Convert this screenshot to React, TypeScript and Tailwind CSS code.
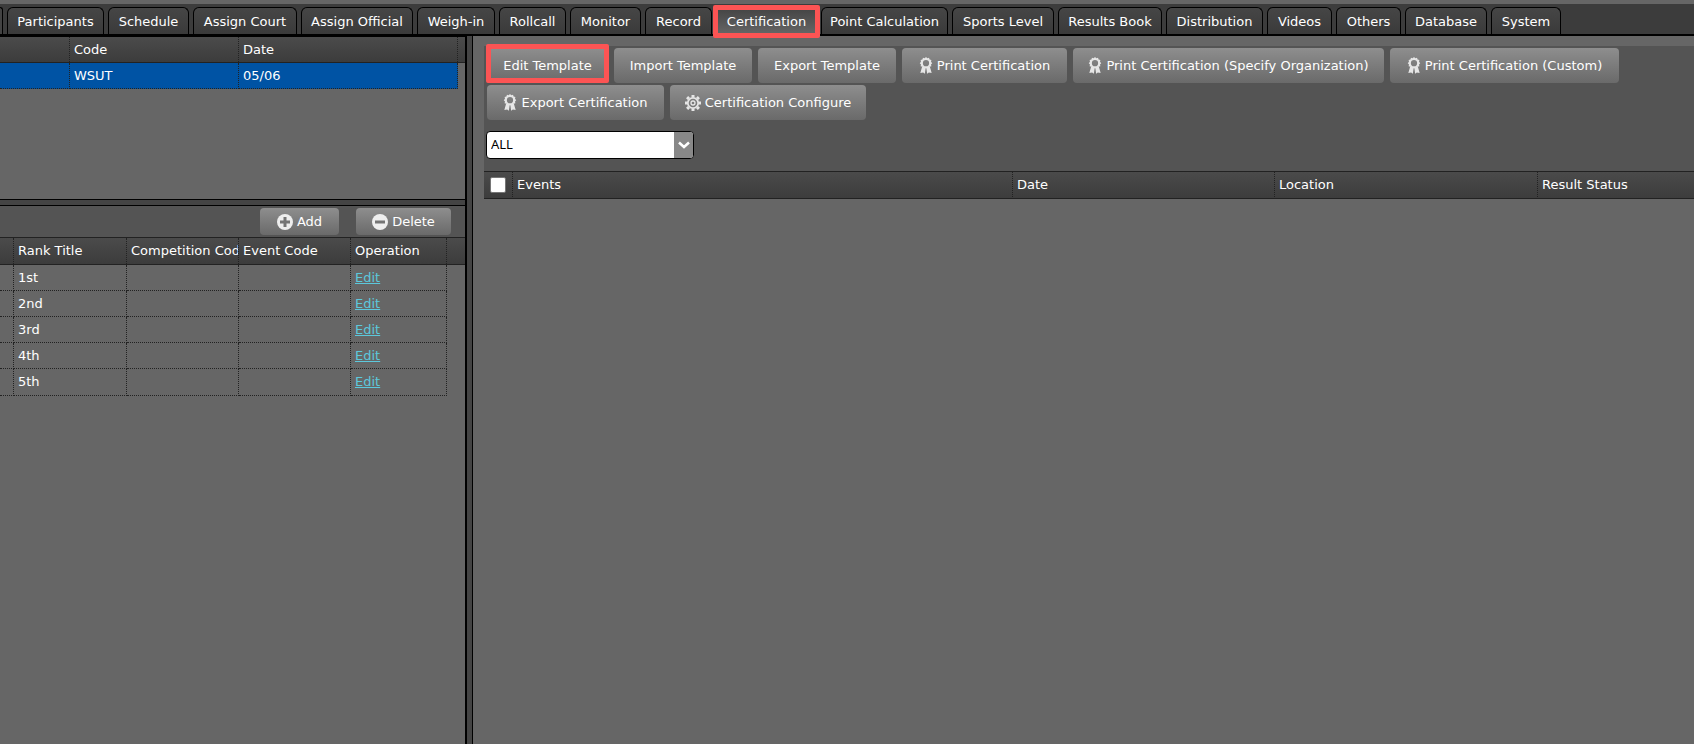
import React from 'react';

interface Tab {
  label: string;
  width: string;
  active?: boolean;
}

const tabs: Tab[] = [
  { label: 'Participants', width: 'w-[97px]' },
  { label: 'Schedule', width: 'w-[81px]' },
  { label: 'Assign Court', width: 'w-[104px]' },
  { label: 'Assign Official', width: 'w-28' },
  { label: 'Weigh-in', width: 'w-[78px]' },
  { label: 'Rollcall', width: 'w-[67px]' },
  { label: 'Monitor', width: 'w-[71px]' },
  { label: 'Record', width: 'w-[67px]' },
  { label: 'Certification', width: 'w-[101px]', active: true },
  { label: 'Point Calculation', width: 'w-[127px]' },
  { label: 'Sports Level', width: 'w-[102px]' },
  { label: 'Results Book', width: 'w-[104px]' },
  { label: 'Distribution', width: 'w-[97px]' },
  { label: 'Videos', width: 'w-[65px]' },
  { label: 'Others', width: 'w-[65px]' },
  { label: 'Database', width: 'w-[82px]' },
  { label: 'System', width: 'w-[70px]' },
];

const ranks = ['1st', '2nd', '3rd', '4th', '5th'];

const RibbonIcon: React.FC = () => (
  <svg width="14" height="17" viewBox="0 0 14 18" className="shrink-0" aria-hidden="true">
    <g fill="#e6e6e6">
      <path
        fillRule="evenodd"
        d="M7 0l1.400 1.300L10.200.8l.6 1.900 1.900.5-.4 1.900L13.600 6.500l-1.300 1.400.4 1.900-1.900.5-.6 1.700H3.800l-.6-1.700-1.900-.5.4-1.900L.4 6.500 1.700 5.100l-.4-1.900 1.900-.5L3.800.8l1.800.5zM7 3.200a3.300 3.300 0 1 0 0 6.600 3.300 3.300 0 0 0 0-6.600z"
      />
      <path d="M2.800 10.500h4l-1 7.200-1.800-1.400-3 .6zM11.200 10.500h-4l1 7.200 1.800-1.400 3 .6z" />
    </g>
  </svg>
);

const GearIcon: React.FC = () => (
  <svg width="16" height="16" viewBox="0 0 16 16" className="shrink-0" aria-hidden="true">
    <g fill="none" stroke="#e6e6e6">
      <circle cx="8" cy="8" r="5.200" strokeWidth="1.800" />
      <circle cx="8" cy="8" r="2" strokeWidth="1.300" />
      <path
        strokeWidth="3"
        d="M8 0v2.500M8 13.500V16M0 8h2.500M13.500 8H16M2.100 2.100l1.800 1.800M12.100 12.100l1.800 1.800M2.100 13.900l1.800-1.800M12.100 3.900l1.800-1.800"
      />
    </g>
  </svg>
);

const RoundIcon: React.FC<{ plus?: boolean }> = ({ plus }) => (
  <svg width="16" height="16" viewBox="0 0 16 16" className="shrink-0" aria-hidden="true">
    <circle cx="8" cy="8" r="8" fill="#eeeeee" />
    <path stroke="#757575" strokeWidth="3" d={plus ? 'M3 8h10M8 3v10' : 'M3 8h10'} />
  </svg>
);

interface ToolButtonProps {
  label: string;
  size: string;
  icon?: React.ReactNode;
  marked?: boolean;
}

const ToolButton: React.FC<ToolButtonProps> = ({ label, size, icon, marked }) => (
  <button
    type="button"
    className={`relative flex items-center justify-center gap-1 rounded bg-linear-to-b from-[#8e8e8e] to-[#6a6a6a] whitespace-nowrap ${size}`}
  >
    {icon}
    {label}
    {marked && (
      <span className="pointer-events-none absolute -inset-x-px -top-1 bottom-0 z-10 rounded-xs border-5 border-[#fc5454]" />
    )}
  </button>
);

const headCell = 'border-r border-dotted border-[#222] pl-1 text-left font-normal whitespace-nowrap overflow-hidden';
const bodyCell = 'border-r border-b border-dotted border-[#222] pl-1';
const headRow = 'bg-linear-to-b from-[#4b4b4b] to-[#3c3c3c]';

const TabBar: React.FC = () => (
  <nav className="flex h-8 items-end gap-1 border-b-2 border-black bg-[#3c3c3c]">
    <span className="h-[27px] w-[3px] rounded-tr-md border-t border-r border-black bg-[#434343]" />
    {tabs.map((tab) => (
      <button
        key={tab.label}
        type="button"
        className={`relative h-[27px] shrink-0 rounded-t-md border border-b-0 border-black pt-0.5 whitespace-nowrap ${tab.width}
          ${tab.active ? 'bg-linear-to-b from-[#444] to-[#666]' : 'bg-linear-to-b from-[#464646] to-[#3a3a3a]'}`}
      >
        {tab.label}
        {tab.active && (
          <span className="pointer-events-none absolute -inset-x-[4px] -top-[3px] -bottom-1 z-10 rounded-xs border-5 border-[#fc5454]" />
        )}
      </button>
    ))}
  </nav>
);

const CompetitionColumns: React.FC = () => (
  <colgroup>
    <col className="w-[70px]" />
    <col className="w-[169px]" />
    <col />
  </colgroup>
);

const CompetitionTable: React.FC = () => (
  <div className="h-[164px] border-y border-black">
    <div className={`border-b border-[#222] ${headRow}`}>
      <table className="w-[458px] table-fixed border-separate border-spacing-0">
        <CompetitionColumns />
        <thead>
          <tr className="h-[25px]">
            <th className={headCell} aria-label="Name" />
            <th className={headCell}>Code</th>
            <th className={headCell}>Date</th>
          </tr>
        </thead>
      </table>
    </div>
    <table className="w-[458px] table-fixed border-separate border-spacing-0">
      <CompetitionColumns />
      <tbody>
        <tr className="h-[26px] bg-[#0053a4]">
          <td className={bodyCell} />
          <td className={bodyCell}>WSUT</td>
          <td className={bodyCell}>05/06</td>
        </tr>
      </tbody>
    </table>
  </div>
);

const RankColumns: React.FC = () => (
  <colgroup>
    <col className="w-3.5" />
    <col className="w-[113px]" />
    <col className="w-28" />
    <col className="w-28" />
    <col />
  </colgroup>
);

const RankTable: React.FC = () => (
  <div>
    <div className={`border-y border-[#222] ${headRow}`}>
      <table className="w-[447px] table-fixed border-separate border-spacing-0">
        <RankColumns />
        <thead>
          <tr className="h-[26px]">
            <th className={headCell} aria-label="No" />
            <th className={headCell}>Rank Title</th>
            <th className={headCell}>Competition Code</th>
            <th className={headCell}>Event Code</th>
            <th className={headCell}>Operation</th>
          </tr>
        </thead>
      </table>
    </div>
    <table className="w-[447px] table-fixed border-separate border-spacing-0">
      <RankColumns />
      <tbody>
        {ranks.map((rank) => (
          <tr key={rank} className="h-[26px] last:h-[27px]">
            <td className={bodyCell} />
            <td className={bodyCell}>{rank}</td>
            <td className={bodyCell} />
            <td className={bodyCell} />
            <td className={bodyCell}>
              <a href="#edit" className="text-[#5cc8dc] underline">
                Edit
              </a>
            </td>
          </tr>
        ))}
      </tbody>
    </table>
  </div>
);

const CertificationPanel: React.FC = () => (
  <section className="min-w-0 flex-1 border-l border-black bg-[#666] pt-2.5 pl-[11px]">
    <div className="bg-[#545454] pt-0.5 pb-3">
      <div className="flex flex-wrap gap-x-1.5 gap-y-0.5 pl-[3px]">
        <ToolButton label="Edit Template" size="h-[35px] w-[121px]" marked />
        <ToolButton label="Import Template" size="h-[35px] w-[138px]" />
        <ToolButton label="Export Template" size="h-[35px] w-[138px]" />
        <ToolButton label="Print Certification" size="h-[35px] w-[165px]" icon={<RibbonIcon />} />
        <ToolButton
          label="Print Certification (Specify Organization)"
          size="h-[35px] w-[311px]"
          icon={<RibbonIcon />}
        />
        <ToolButton label="Print Certification (Custom)" size="h-[35px] w-[229px]" icon={<RibbonIcon />} />
        <ToolButton label="Export Certification" size="h-[35px] w-[177px]" icon={<RibbonIcon />} />
        <ToolButton label="Certification Configure" size="h-[35px] w-[196px]" icon={<GearIcon />} />
      </div>
      <div className="relative mt-[11px] ml-0.5 flex h-7 w-52 overflow-hidden rounded border border-black bg-white">
        <select
          aria-label="Event filter"
          className="w-full appearance-none bg-transparent pb-0.5 pl-1 font-['Noto_Sans',sans-serif] text-black"
        >
          <option>ALL</option>
        </select>
        <span className="pointer-events-none absolute inset-y-0 right-0 flex w-[19px] items-center justify-center bg-[#888]">
          <svg width="12" height="8" viewBox="0 0 12 8" aria-hidden="true">
            <path d="M1 1.500l5 4.500 5-4.500" fill="none" stroke="#fff" strokeWidth="2.500" />
          </svg>
        </span>
      </div>
    </div>
    <table className="w-full table-fixed border-separate border-spacing-0">
      <colgroup>
        <col className="w-[29px]" />
        <col className="w-[500px]" />
        <col className="w-[262px]" />
        <col className="w-[263px]" />
        <col />
      </colgroup>
      <thead>
        <tr className={`h-7 ${headRow}`}>
          <th className="border-y border-r border-[#222] [border-right-style:dotted]">
            <input
              type="checkbox"
              aria-label="Select all events"
              className="mx-auto block size-4 appearance-none rounded-xs border border-[#767676] bg-white"
            />
          </th>
          {['Events', 'Date', 'Location'].map((name) => (
            <th
              key={name}
              className="border-y border-r border-[#222] px-1 text-left font-normal [border-right-style:dotted]"
            >
              {name}
            </th>
          ))}
          <th className="border-y border-[#222] px-1 text-left font-normal whitespace-nowrap">Result Status</th>
        </tr>
      </thead>
    </table>
  </section>
);

const App: React.FC = () => (
  <div className="flex min-h-screen flex-col overflow-hidden bg-[#666] pt-1 font-['DejaVu_Sans',sans-serif] text-[13px] leading-5 text-white">
    <TabBar />
    <main className="flex flex-1">
      <aside className="w-[467px] shrink-0 border-r-2 border-black">
        <CompetitionTable />
        <div className="h-[5px] bg-[#444]" />
        <div className="flex h-8 items-center justify-end gap-[17px] border-t border-black bg-[#545454] pr-3.5">
          <ToolButton label="Add" size="h-[27px] w-[79px]" icon={<RoundIcon plus />} />
          <ToolButton label="Delete" size="h-[27px] w-[95px]" icon={<RoundIcon />} />
        </div>
        <RankTable />
      </aside>
      <div className="w-[5px] shrink-0 bg-[#444]" />
      <CertificationPanel />
    </main>
  </div>
);

export default App;
